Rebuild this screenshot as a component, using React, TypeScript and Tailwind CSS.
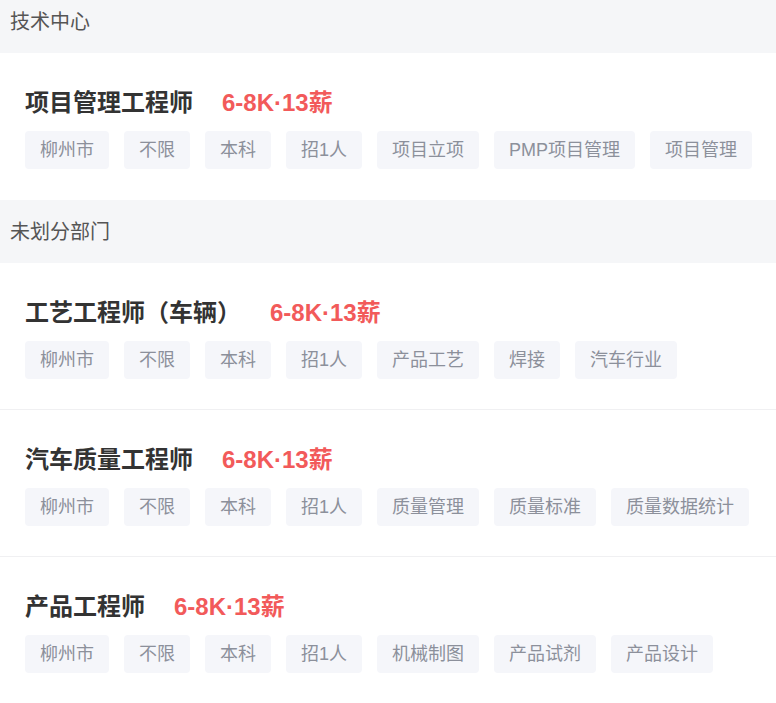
const font = {
  fontFamily: '"Liberation Sans", Arial, "Noto Sans CJK SC", sans-serif',
};

type Job = {
  title: string;
  salary: string;
  tags: string[];
};

type Section = {
  name: string;
  jobs: Job[];
};

const base = ["柳州市", "不限", "本科", "招1人"];

const sections: Section[] = [
  {
    name: "技术中心",
    jobs: [
      {
        title: "项目管理工程师",
        salary: "6-8K·13薪",
        tags: [...base, "项目立项", "PMP项目管理", "项目管理"],
      },
    ],
  },
  {
    name: "未划分部门",
    jobs: [
      {
        title: "工艺工程师（车辆）",
        salary: "6-8K·13薪",
        tags: [...base, "产品工艺", "焊接", "汽车行业"],
      },
      {
        title: "汽车质量工程师",
        salary: "6-8K·13薪",
        tags: [...base, "质量管理", "质量标准", "质量数据统计"],
      },
      {
        title: "产品工程师",
        salary: "6-8K·13薪",
        tags: [...base, "机械制图", "产品试剂", "产品设计"],
      },
    ],
  },
];

export default function App() {
  return (
    <div className="w-[776px] h-[703px] overflow-hidden bg-white" style={font}>
      <div className="-mt-[10px]">
        {sections.map((s) => (
          <div key={s.name}>
            <div className="h-[63px] flex items-center px-[10px] bg-[#f5f6f8] text-[20px] text-[#555555]">
              {s.name}
            </div>
            {s.jobs.map((job, i) => (
              <JobCard key={job.title} job={job} last={i === s.jobs.length - 1} />
            ))}
          </div>
        ))}
      </div>
    </div>
  );
}

function JobCard({ job, last }: { job: Job; last: boolean }) {
  return (
    <div
      className={`px-[25px] pt-[33px] ${
        last ? "pb-[31px]" : "pb-[30px] border-b border-[#f0f0f2]"
      }`}
    >
      <div className="flex items-center h-[34px] gap-[29px]">
        <span className="text-[24px] font-bold text-[#333333]">{job.title}</span>
        <span className="text-[24px] font-bold text-[#f25a5a]">{job.salary}</span>
      </div>
      <div className="flex gap-[15px] mt-[11px]">
        {job.tags.map((t) => (
          <span
            key={t}
            className="h-[38px] shrink-0 whitespace-nowrap flex items-center px-[15px] rounded-[4px] bg-[#f5f6fa] text-[18px] text-[#8c909b]"
          >
            {t}
          </span>
        ))}
      </div>
    </div>
  );
}
